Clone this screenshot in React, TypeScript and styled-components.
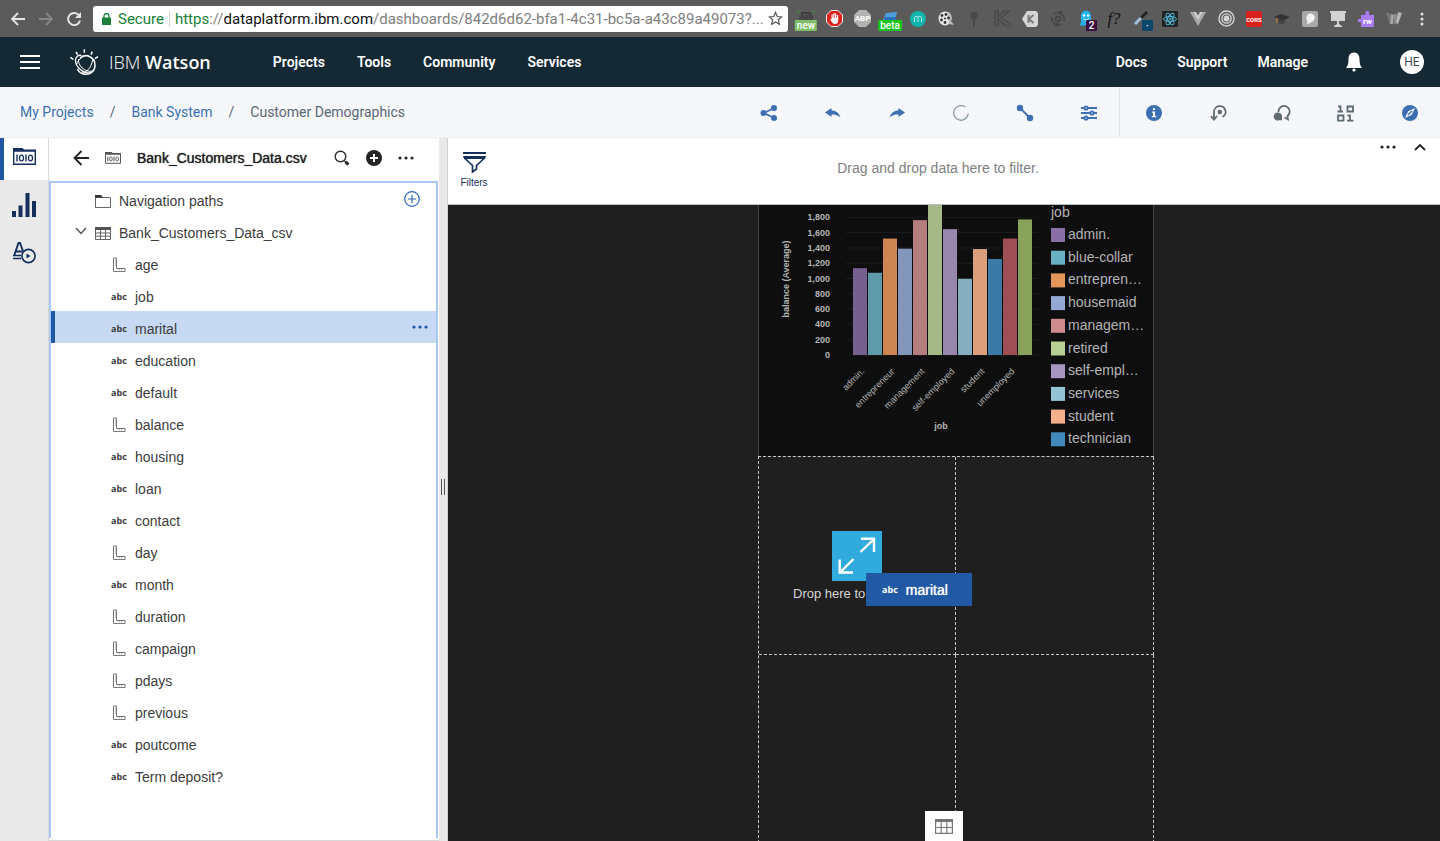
import React from "react";
import styled, { createGlobalStyle, css } from "styled-components";

const sans = `"Liberation Sans", Arial, sans-serif`;
const ui = `Roboto, "Noto Sans", sans-serif`;

const GlobalStyle = createGlobalStyle`
  *, *::before, *::after { box-sizing: border-box; }
  body { margin: 0; font-family: ${sans}; font-size: 14px; color: #3c3c3c; background: #1f1f1f; }
  button { font: inherit; color: inherit; background: none; border: 0; padding: 0; cursor: pointer; }
  a { color: inherit; text-decoration: none; }
  ul { list-style: none; margin: 0; padding: 0; }
  svg { display: block; flex: none; }
`;

const Shell = styled.div`
  display: flex;
  flex-direction: column;
  height: 100vh;
  min-height: 480px;
  overflow: hidden;
`;

/* ---------- browser bar ---------- */

const BrowserBar = styled.div`
  display: flex;
  align-items: center;
  flex: none;
  height: 37px;
  padding: 0 4px;
  background: #5b5b5b;
`;

const BrowserButton = styled.button`
  display: flex;
  align-items: center;
  justify-content: center;
  width: 28px;
  height: 28px;
`;

const Address = styled.div`
  display: flex;
  align-items: center;
  flex: 1;
  min-width: 0;
  height: 26px;
  margin: 0 4px 0 5px;
  padding: 0 5px 0 9px;
  border-radius: 3px;
  background: #fff;
  color: #808080;
  font: 15px/26px Roboto, sans-serif;
`;

const Secure = styled.span`
  margin: 0 5px 0 7px;
  padding-right: 5px;
  border-right: 1px solid #d2d2d2;
  color: #188038;
  line-height: 16px;
`;

const Url = styled.span`
  flex: 1;
  min-width: 0;
  overflow: hidden;
  white-space: nowrap;
`;

const UrlScheme = styled.span`
  color: #188038;
`;

const UrlHost = styled.span`
  color: #111;
`;

const Extension = styled.button`
  position: relative;
  display: flex;
  align-items: center;
  justify-content: center;
  width: 28px;
  height: 28px;
`;

const ExtensionBadge = styled.span<{ $color: string; $corner?: boolean }>`
  position: absolute;
  bottom: 2px;
  left: ${(p) => (p.$corner ? "14px" : "50%")};
  transform: ${(p) => (p.$corner ? "none" : "translateX(-50%)")};
  min-width: 11px;
  padding: 0 2px;
  border-radius: 1px;
  background: ${(p) => p.$color};
  color: #fff;
  font: 500 10px/11px Roboto, sans-serif;
`;

/* ---------- product header ---------- */

const Header = styled.header`
  display: flex;
  align-items: center;
  flex: none;
  height: 50px;
  padding: 0 16px 0 20px;
  background: #152935;
  color: #fff;
  font-family: ${ui};
`;

const Brand = styled.a`
  display: flex;
  align-items: center;
  gap: 10px;
  margin-left: 30px;
  font-family: "Open Sans", sans-serif;
  font-size: 18px;
  font-weight: 300;
  white-space: nowrap;

  strong { font-weight: 600; }
`;

const Nav = styled.nav<{ $end?: boolean }>`
  display: flex;
  gap: ${(p) => (p.$end ? "30px" : "32px")};
  margin-left: ${(p) => (p.$end ? "auto" : "62px")};
  margin-right: ${(p) => (p.$end ? "38px" : "0")};
  font-size: 14px;
  font-weight: 600;
`;

const Avatar = styled.button`
  display: flex;
  align-items: center;
  justify-content: center;
  width: 24px;
  height: 24px;
  margin-left: 38px;
  border-radius: 50%;
  background: #fff;
  color: #3b4b54;
  font: 12px ${ui};
`;

/* ---------- breadcrumb bar ---------- */

const SubHeader = styled.div`
  display: flex;
  align-items: stretch;
  flex: none;
  height: 51px;
  border-bottom: 1px solid #ececf0;
  background: #f5f7fb;
`;

const Breadcrumb = styled.nav`
  display: flex;
  align-items: center;
  gap: 16px;
  flex: 1;
  padding-left: 20px;
  color: #5a6872;
  font: 14px ${ui};
  white-space: nowrap;

  a { color: #3d70b2; }
`;

const ToolGroup = styled.div<{ $divided?: boolean }>`
  display: flex;
  ${(p) =>
    p.$divided &&
    css`
      border-left: 1px solid #dfe3e6;
    `}
`;

const ToolButton = styled.button`
  display: flex;
  align-items: center;
  justify-content: center;
  width: 64px;
  padding: 2px 0 0 3px;
  color: #3d70b2;
`;

/* ---------- workspace ---------- */

const Workspace = styled.div`
  display: flex;
  flex: 1;
  min-height: 0;
`;

const Rail = styled.div`
  flex: none;
  width: 49px;
  border-right: 1px solid #d8d8d8;
  background: #e9e9e9;
`;

const RailButton = styled.button<{ $active?: boolean }>`
  display: flex;
  align-items: center;
  justify-content: center;
  width: 100%;
  height: ${(p) => (p.$active ? "42px" : "48px")};
  border-left: 4px solid ${(p) => (p.$active ? "#1f57a4" : "transparent")};
  padding: ${(p) => (p.$active ? "0 4px 5px 0" : "1px 4px 0 0")};
  background: ${(p) => (p.$active ? "#fff" : "transparent")};
`;

const DataPanel = styled.section`
  display: flex;
  flex-direction: column;
  flex: none;
  width: 390px;
  padding: 0 1px 2px 0;
  border-bottom: 1px solid #d8d8d8;
  background: #fff;
`;

const PanelHeader = styled.header`
  display: flex;
  align-items: center;
  flex: none;
  height: 43px;
  padding: 0 16px 3px 24px;
`;

const SourceIcon = styled.span`
  margin: 0 16px;
`;

const PanelTitle = styled.h2`
  flex: 1;
  margin: 0;
  font-size: 14px;
  font-weight: 400;
  color: #222;
  text-shadow: 0 0 1px #222;
`;

const IconButton = styled.button`
  display: flex;
  align-items: center;
  justify-content: center;
  width: 32px;
  height: 32px;
`;

const Tree = styled.ul`
  flex: 1;
  min-height: 0;
  overflow: hidden;
  border: 2px solid #a9c8f8;
  border-bottom: 0;
`;

const TreeRow = styled.li<{ $depth: number; $selected?: boolean }>`
  display: flex;
  align-items: center;
  height: 32px;
  padding-left: ${(p) => (p.$depth ? "54px" : "20px")};
  border-left: 4px solid ${(p) => (p.$selected ? "#1f57a4" : "transparent")};
  background: ${(p) => (p.$selected ? "#c8daf3" : "transparent")};
`;

const Twisty = styled.span`
  width: 18px;
`;

const TreeIcon = styled.span`
  display: flex;
  align-items: center;
  justify-content: center;
  width: 20px;
  height: 32px;
  padding-top: 4px;
`;

const TreeLabel = styled.button`
  flex: 1;
  margin-left: 6px;
  padding-top: 4px;
  text-align: left;
  line-height: 28px;
`;

const TreeAction = styled(IconButton)`
  margin-right: 8px;
`;

const Abc = styled.span<{ $light?: boolean }>`
  color: ${(p) => (p.$light ? "#fff" : "#3c3c3c")};
  font: 700 9px/12px "Open Sans", sans-serif;
`;

const Splitter = styled.div`
  display: flex;
  align-items: center;
  justify-content: center;
  flex: none;
  width: 9px;
  padding-bottom: 5px;
  border-right: 1px solid #d0d0d0;
  background: #e9e9e9;
`;

const SplitterGrip = styled.span`
  width: 4px;
  height: 16px;
  border: 1px solid #555;
  border-width: 0 1px;
`;

const Main = styled.main`
  display: flex;
  flex-direction: column;
  flex: 1;
  min-width: 0;
`;

const FilterBar = styled.div`
  display: flex;
  align-items: flex-start;
  flex: none;
  height: 67px;
  border-bottom: 1px solid #b8bfc2;
  background: #fff;
`;

const FilterButton = styled.button`
  display: flex;
  flex-direction: column;
  align-items: center;
  gap: 4px;
  width: 52px;
  padding-top: 14px;
  color: #152f5c;
  font-size: 10px;
  line-height: 12px;
`;

const FilterHint = styled.p`
  flex: 1;
  margin: 0;
  padding-left: 8px;
  color: #808080;
  text-align: center;
  line-height: 60px;
`;

const FilterActions = styled.div`
  display: flex;
  padding: 0 4px;
  margin-top: -7px;
`;

const Canvas = styled.div`
  position: relative;
  display: flex;
  flex-direction: column;
  align-items: center;
  flex: 1;
  min-height: 0;
  overflow: hidden;
  padding-left: 24px;
  background: #1f1f1f;
`;

const ChartCard = styled.div`
  flex: none;
  height: 251px;
  border: 1px solid #3f4242;
  border-width: 0 1px;
  background: #0e0e0e;
`;

const DropGrid = styled.div`
  display: grid;
  grid-template-columns: 197px 198px;
  grid-auto-rows: 198px;
  flex: none;
  border-top: 1px dashed #c8c8c8;
  border-left: 1px dashed #c8c8c8;
`;

const DropCell = styled.div`
  position: relative;
  padding-top: 74px;
  border-right: 1px dashed #c8c8c8;
  border-bottom: 1px dashed #c8c8c8;
`;

const DropIcon = styled.div`
  width: 50px;
  margin: 0 auto;
  background: #31aade;
`;

const DropText = styled.p`
  margin: 4px 0 0 34px;
  color: #d6d6d6;
  font-size: 13px;
  line-height: 18px;
`;

const DragGhost = styled.div`
  position: absolute;
  z-index: 1;
  left: 107px;
  top: 116px;
  display: flex;
  align-items: center;
  gap: 8px;
  width: 106px;
  height: 33px;
  padding-left: 16px;
  background: #2159a5;
  color: #fff;
  text-shadow: 0 0 1px #fff;

  ${Abc} { text-shadow: none; }
`;

const DrawerTab = styled.button`
  position: absolute;
  left: 50%;
  bottom: 0;
  display: flex;
  align-items: center;
  justify-content: center;
  width: 38px;
  height: 30px;
  transform: translateX(-50%);
  background: #fff;
`;

/* ---------- icons ---------- */

const DataFolderIcon = ({ size, color }: { size: number; color: string }) => (
  <svg width={size} height={(size * 17) / 23} viewBox="0 0 23 17" fill="none" stroke={color}>
    <path d="M0 0h9.500l1.500 1.500h12v2.300H0z" fill={color} stroke="none" />
    <path d="M.7 3v13.300h21.600V3" strokeWidth="1.400" />
    <path d="M4 6.500v7M13 6.500v7" strokeWidth="1.400" />
    <ellipse cx="8.500" cy="10" rx="2" ry="2.900" strokeWidth="1.300" />
    <ellipse cx="17.500" cy="10" rx="2" ry="2.900" strokeWidth="1.300" />
  </svg>
);

const FolderIcon = () => (
  <svg width="16" height="13" viewBox="0 0 16 13" fill="none" stroke="#666">
    <path d="M.5 12.500v-10h15v10z" />
    <path d="M0 0h6l2 2.400H0z" fill="#333" stroke="none" />
  </svg>
);

const TableIcon = ({ color = "#555" }: { color?: string }) => (
  <svg width="16" height="13" viewBox="0 0 16 13" fill="none" stroke={color}>
    <path d="M0 0h16v3H0z" fill={color} stroke="none" />
    <path d="M.5 1v11.500h15V1M.5 6h15M.5 9.200h15M5.500 3v9.500M10.500 3v9.500" strokeWidth=".9" />
  </svg>
);

const LargeTableIcon = () => (
  <svg width="18" height="15" viewBox="0 0 18 15" fill="none" stroke="#777">
    <path d="M0 0h18v3H0z" fill="#777" stroke="none" />
    <path d="M.6 1v13.400h16.800V1M.5 8.500h17M6.200 3v11M11.800 3v11" strokeWidth="1.200" />
  </svg>
);

const RulerIcon = () => (
  <svg width="14" height="16" viewBox="0 0 14 16" fill="none" stroke="#777">
    <path d="M1.500 1h3v10.500h8.500v3H1.500z" />
    <path d="M3 3.500h1.500M3 6h1.500M3 8.500h1.500M7 11.500v1.500M9.500 11.500v1.500" strokeWidth=".8" />
  </svg>
);

const DotsIcon = ({ color }: { color: string }) => (
  <svg width="16" height="4" viewBox="0 0 16 4" fill={color}>
    <circle cx="2" cy="2" r="1.600" />
    <circle cx="8" cy="2" r="1.600" />
    <circle cx="14" cy="2" r="1.600" />
  </svg>
);

const WatsonLogo = () => (
  <svg width="29" height="27" viewBox="0 0 87 81" fill="none" stroke="#fff" strokeWidth="4.500">
    <path d="M30 27C44 12 76 22 75 50 74 68 60 76 48 76 34 76 26 68 22 60" />
    <path d="M34 19C14 16 8 42 32 62c10 9 24 12 32 8" strokeWidth="4" />
    <path d="M20 46c4-16 22-28 36-26M26 30c-4 18 18 42 42 36M34 72c14 0 30-14 34-40" strokeWidth="3" />
    <path d="M1 25l9 6M18 9l5 8M43 1v10M67 8l-4 9M84 23l-9 6" />
  </svg>
);

const ext = (title: string, body: React.ReactNode, badge?: React.ReactNode) => ({ title, body, badge });

const extensions = [
  ext(
    "Screenshot",
    <svg width="18" height="18" viewBox="0 0 18 18" fill="none">
      <path d="M5 5V3h8v2" stroke="#333" strokeWidth="1.500" />
      <path d="M2 5h14v8H2z" fill="#484848" />
      <path d="M1 4V1h3M14 1h3v3" stroke="#3f8a3f" />
    </svg>,
    <ExtensionBadge $color="#7fbf6a">new</ExtensionBadge>
  ),
  ext(
    "Ad blocker",
    <svg width="17" height="17" viewBox="0 0 17 17">
      <path d="M5 .5h7l4.500 4.500v7L12 16.500H5L.5 12V5z" fill="#d8231f" stroke="#eee" />
      <path
        d="M4 9l1.500.6V4.500h1.200V8h.6V3h1.200v5h.6V3.500h1.200V8h.6V5h1.300v5.500c0 2.500-1.500 3.500-3.300 3.500S5.800 12.500 4 9z"
        fill="#fff"
      />
    </svg>
  ),
  ext(
    "ABP",
    <svg width="17" height="17" viewBox="0 0 17 17">
      <path d="M5 0h7l5 5v7l-5 5H5l-5-5V5z" fill="#b3b3b3" />
      <text x="8.500" y="11.300" textAnchor="middle" fontFamily="Roboto" fontWeight="700" fontSize="8" fill="#fff">
        ABP
      </text>
    </svg>
  ),
  ext(
    "Folder tool",
    <svg width="16" height="18" viewBox="0 0 16 18">
      <path d="M4 3l11-1-2 8H1z" fill="#4d9fe0" />
      <path d="M3 7h11l-2 5H1z" fill="#2a6fb8" />
    </svg>,
    <ExtensionBadge $color="#18c61f">beta</ExtensionBadge>
  ),
  ext(
    "Momentum",
    <svg width="16" height="16" viewBox="0 0 16 16" fill="none">
      <circle cx="8" cy="8" r="8" fill="#12b5ab" />
      <path d="M4.500 11V6.500c0-1.500 3.500-1.500 3.500 0V11M8 6.500c0-1.500 3.500-1.500 3.500 0V11" stroke="#b8efe9" />
    </svg>
  ),
  ext(
    "Film",
    <svg width="17" height="16" viewBox="0 0 17 16">
      <ellipse cx="7" cy="7.500" rx="6.500" ry="7" fill="#e6e6e6" />
      <path d="M10 1c4 1 4 6 3 9l3 4-5-1z" fill="#bbb" />
      <g fill="#333">
        <circle cx="4" cy="4.500" r="1.400" /><circle cx="8" cy="3.500" r="1.400" />
        <circle cx="3.500" cy="9" r="1.400" /><circle cx="10.500" cy="7" r="1.400" />
        <circle cx="7" cy="11.500" r="1.400" /><circle cx="7" cy="7.500" r="1" />
      </g>
    </svg>
  ),
  ext(
    "Key",
    <svg width="10" height="16" viewBox="0 0 10 16" fill="#484848">
      <circle cx="5" cy="4.500" r="3.800" /><path d="M4 7h2v9H4z" />
    </svg>
  ),
  ext(
    "K arrow",
    <svg width="17" height="17" viewBox="0 0 17 17" fill="none" stroke="#474747" strokeWidth="1.200">
      <path d="M1 1v15h3V9l8 7h4v-4M1 1h3v6l6-6h5L7 8l8 5" />
    </svg>
  ),
  ext(
    "K",
    <svg width="17" height="16" viewBox="0 0 17 16" fill="none">
      <path d="M5 0h9l2 2v12l-2 2H5L0 8z" fill="#d5d5d5" />
      <path d="M6.500 4v8M11.500 4L7 8l4.500 4" stroke="#7a7a7a" strokeWidth="2" />
    </svg>
  ),
  ext(
    "Sync",
    <svg width="16" height="16" viewBox="0 0 16 16" fill="none" stroke="#444" strokeWidth="1.300">
      <circle cx="8" cy="8" r="2.500" />
      <path d="M12 13A6.500 6.500 0 0 1 2 6M4 3A6.500 6.500 0 0 1 14 10M9 13H5l2 2M8 1h4l-1 3" />
    </svg>
  ),
  ext(
    "Ghost",
    <svg width="14" height="17" viewBox="0 0 14 17">
      <path d="M1 15l1-3V6c0-7 10-7 10 0v6l2 4-4-1-2 2-2-2-3 1z" fill="#22b3ee" />
      <circle cx="5" cy="5.500" r="1.200" fill="#fff" /><circle cx="9" cy="5.500" r="1.200" fill="#fff" />
      <path d="M4.500 8.500c1 2 4 2 5 0" stroke="#fff" fill="none" />
    </svg>,
    <ExtensionBadge $color="#3a1040" $corner>2</ExtensionBadge>
  ),
  ext(
    "Font finder",
    <svg width="18" height="18" viewBox="0 0 18 18">
      <text x="9" y="13.500" textAnchor="middle" fontFamily="Liberation Serif" fontStyle="italic" fontSize="17" fill="#111">
        f?
      </text>
    </svg>
  ),
  ext(
    "Color picker",
    <svg width="18" height="18" viewBox="0 0 18 18" fill="none">
      <path d="M2 14L9 7" stroke="#9fc5de" strokeWidth="3" /><path d="M8 8l6-6" stroke="#222" strokeWidth="3" />
    </svg>,
    <ExtensionBadge $color="#08466b" $corner>·</ExtensionBadge>
  ),
  ext(
    "React",
    <svg width="16" height="16" viewBox="0 0 16 16" fill="none" stroke="#53c1de" strokeWidth=".9">
      <rect width="16" height="16" rx="1" fill="#222" stroke="none" />
      <ellipse cx="8" cy="8" rx="6.500" ry="2.500" />
      <ellipse cx="8" cy="8" rx="6.500" ry="2.500" transform="rotate(60 8 8)" />
      <ellipse cx="8" cy="8" rx="6.500" ry="2.500" transform="rotate(120 8 8)" />
      <circle cx="8" cy="8" r="1" />
    </svg>
  ),
  ext(
    "Vue",
    <svg width="16" height="14" viewBox="0 0 16 14">
      <path d="M0 0h5l3 5 3-5h5L8 14z" fill="#a9a9a9" /><path d="M3.500 0H6l2 3.500L10 0h2.500L8 8z" fill="#cfcfcf" />
    </svg>
  ),
  ext(
    "Orbit",
    <svg width="17" height="17" viewBox="0 0 17 17" fill="none" stroke="#d4d4d4" strokeWidth="1.400">
      <circle cx="8.500" cy="8.500" r="7.500" /><circle cx="8.500" cy="8.500" r="4.600" />
      <circle cx="8.500" cy="8.500" r="2.200" fill="#d4d4d4" />
    </svg>
  ),
  ext(
    "CORS",
    <svg width="16" height="16" viewBox="0 0 16 16">
      <rect width="16" height="16" rx="2" fill="#d9201c" />
      <text x="8" y="10.500" textAnchor="middle" fontFamily="Roboto" fontWeight="700" fontSize="6" fill="#fff">
        CORS
      </text>
    </svg>
  ),
  ext(
    "Scholar",
    <svg width="16" height="12" viewBox="0 0 16 12">
      <path d="M0 4l7-3 9 3-8 4z" fill="#333" /><path d="M4 6v4c2 1.500 5 1.500 7 0V6L8 8z" fill="#444" />
      <path d="M3 5v5" stroke="#c98a2a" />
    </svg>
  ),
  ext(
    "Balloon",
    <svg width="16" height="16" viewBox="0 0 16 16">
      <rect width="16" height="16" rx="2" fill="#a8a8a8" />
      <path d="M9 2.500c6 1 4 8 0 9l-4 2 .5-3C3 7 5 2 9 2.500z" fill="#f2f2f2" />
    </svg>
  ),
  ext(
    "Presenter",
    <svg width="16" height="16" viewBox="0 0 16 16" fill="#d2d2d2">
      <path d="M0 0h16v2h-1v8H1V2H0zM7 10h2v3l3 2v1H4v-1l3-2z" />
    </svg>
  ),
  ext(
    "RW",
    <svg width="17" height="16" viewBox="0 0 17 16">
      <path d="M3 4h4.500V2.500a1.800 1.800 0 0 1 3.500-1.500V4h5v12H3v-5H0V8h3z" fill="#a97bf0" />
      <text x="9.500" y="12.500" textAnchor="middle" fontFamily="Roboto" fontWeight="700" fontSize="8" fill="#fff">
        rw
      </text>
    </svg>
  ),
  ext(
    "W",
    <svg width="16" height="13" viewBox="0 0 16 13">
      <path d="M0 1h4l2 8-2 3z" fill="#777" /><path d="M5 2l3 1-1 9H4z" fill="#a5a5a5" />
      <path d="M8 2h3v9l-3 2z" fill="#888" /><path d="M12 0l4 1-4 11-2-1z" fill="#b5b5b5" />
    </svg>
  ),
  ext(
    "Menu",
    <svg width="4" height="14" viewBox="0 0 4 14" fill="#e6e6e6">
      <circle cx="2" cy="2" r="1.500" /><circle cx="2" cy="7" r="1.500" /><circle cx="2" cy="12" r="1.500" />
    </svg>
  ),
];

const editTools = [
  ext(
    "Share",
    <svg width="18" height="18" viewBox="0 0 18 18" fill="currentColor">
      <path d="M14 4L4 9l10 5" fill="none" stroke="currentColor" strokeWidth="1.800" />
      <circle cx="3.500" cy="9" r="3" /><circle cx="14" cy="4" r="3" /><circle cx="14" cy="14" r="3" />
    </svg>
  ),
  ext(
    "Undo",
    <svg width="16" height="12" viewBox="0 0 16 12" fill="currentColor">
      <path d="M0 5.500L6.500 1v2.500C11 3.500 14 6 15.500 10.500 12.500 8 10 7.500 6.500 7.500V10z" />
    </svg>
  ),
  ext(
    "Redo",
    <svg width="16" height="12" viewBox="0 0 16 12" fill="currentColor">
      <path d="M16 5.500L9.500 1v2.500C5 3.500 2 6 .5 10.500 3.500 8 6 7.500 9.500 7.500V10z" />
    </svg>
  ),
  ext(
    "Refresh",
    <svg width="16" height="16" viewBox="0 0 16 16" fill="none" stroke="#8c9ba5" strokeWidth="1.300">
      <path d="M12.300 2A7.300 7.300 0 1 0 15.300 8.500" />
    </svg>
  ),
  ext(
    "Connect",
    <svg width="18" height="18" viewBox="0 0 18 18" fill="currentColor">
      <path d="M4 4l10 10" stroke="currentColor" strokeWidth="1.800" />
      <circle cx="4" cy="4" r="3.200" /><circle cx="14" cy="14" r="3.200" />
    </svg>
  ),
  ext(
    "Settings",
    <svg width="16" height="16" viewBox="0 0 16 16" fill="#f5f7fb" stroke="currentColor" strokeWidth="1.900">
      <path d="M0 3h16M0 8h16M0 13h16" />
      <circle cx="5" cy="3" r="1.600" /><circle cx="11" cy="8" r="1.600" /><circle cx="5" cy="13" r="1.600" />
    </svg>
  ),
];

const viewTools = [
  ext(
    "Info",
    <svg width="16" height="16" viewBox="0 0 16 16">
      <circle cx="8" cy="8" r="8" fill="currentColor" />
      <path d="M7 3.200h2v1.800H7zM6 6.500h3v4.500h1.200v1.300H5.800V11H7V7.800H6z" fill="#fff" />
    </svg>
  ),
  ext(
    "Replay",
    <svg width="18" height="18" viewBox="0 0 18 18" fill="none" stroke="#5f6b70" strokeWidth="1.800">
      <path d="M5 15V8a5.800 5.800 0 1 1 8.500 5" /><path d="M2 12l3 3.500L8 12" />
      <circle cx="10.800" cy="8" r="2.200" fill="#5f6b70" stroke="none" />
    </svg>
  ),
  ext(
    "Comments",
    <svg width="18" height="18" viewBox="0 0 18 18" fill="none" stroke="#5f6b70" strokeWidth="1.700">
      <path d="M5.500 8a5.600 5.600 0 1 1 9 4l.5 3.500-3.500-2" />
      <path d="M5 8.500a4 4 0 0 1 3.800 5.500l.4 2.500-2.500-.5A4 4 0 1 1 5 8.500z" fill="#5f6b70" stroke="none" />
    </svg>
  ),
  ext(
    "Data",
    <svg width="17" height="17" viewBox="0 0 17 17" fill="none" stroke="#5f6b70" strokeWidth="1.800">
      <path d="M1 1.500h2.500V6.500M.5 6.500H6M10.500 1.500H16v5h-5.500zM1 10.500h5.500v5.200H1zM10.500 10.500H13v5.200M10 15.700h6.500" />
    </svg>
  ),
  ext(
    "Explore",
    <svg width="16" height="16" viewBox="0 0 16 16">
      <circle cx="8" cy="8" r="8" fill="currentColor" />
      <path d="M13 3L9.800 9.800 3 13l3.200-6.800z" fill="#f5f7fb" />
      <path d="M6 10l4-4" stroke="currentColor" strokeWidth="1.300" />
    </svg>
  ),
];

/* ---------- data ---------- */

type Field = { name: string; kind: "measure" | "text" };

const fields: Field[] = [
  { name: "age", kind: "measure" },
  { name: "job", kind: "text" },
  { name: "marital", kind: "text" },
  { name: "education", kind: "text" },
  { name: "default", kind: "text" },
  { name: "balance", kind: "measure" },
  { name: "housing", kind: "text" },
  { name: "loan", kind: "text" },
  { name: "contact", kind: "text" },
  { name: "day", kind: "measure" },
  { name: "month", kind: "text" },
  { name: "duration", kind: "measure" },
  { name: "campaign", kind: "measure" },
  { name: "pdays", kind: "measure" },
  { name: "previous", kind: "measure" },
  { name: "poutcome", kind: "text" },
  { name: "Term deposit?", kind: "text" },
];

const bars = [
  { value: 1135, color: "#75608f" },
  { value: 1075, color: "#5f9bab" },
  { value: 1522, color: "#cd8651" },
  { value: 1390, color: "#8296b9" },
  { value: 1763, color: "#b67d7f" },
  { value: 2200, color: "#a4b985" },
  { value: 1645, color: "#9787ad" },
  { value: 996, color: "#84adbd" },
  { value: 1385, color: "#db9f7d" },
  { value: 1255, color: "#3b7aa6" },
  { value: 1522, color: "#9d4f55" },
  { value: 1772, color: "#89a35c" },
];

const ticks = [0, 200, 400, 600, 800, 1000, 1200, 1400, 1600, 1800];
const categories = ["admin.", "entrepreneur", "management", "self-employed", "student", "unemployed"];

const legend = [
  ["admin.", "#8870a6"],
  ["blue-collar", "#69b0c2"],
  ["entrepren…", "#e5965b"],
  ["housemaid", "#93a8d2"],
  ["managem…", "#cd8b8d"],
  ["retired", "#b7cf93"],
  ["self-empl…", "#a896c0"],
  ["services", "#93c3d4"],
  ["student", "#f3b08b"],
  ["technician", "#4289bb"],
];

const yOf = (value: number) => 150 - value * 0.0765;

const BalanceChart = () => (
  <svg width="394" height="251" viewBox="0 0 394 251" fontFamily="Liberation Sans, Arial, sans-serif" fill="#b4b4b4">
    <g fontSize="9" fontWeight="700">
      {ticks.map((t) => (
        <React.Fragment key={t}>
          <path d={`M87 ${yOf(t)}h192`} stroke="#1d1d1d" />
          <text x="71" y={yOf(t) + 3} textAnchor="end">
            {t.toLocaleString("en-US")}
          </text>
        </React.Fragment>
      ))}
      <text x="0" y="0" textAnchor="middle" transform="translate(30 74) rotate(-90)">
        balance (Average)
      </text>
      <text x="182" y="224" textAnchor="middle">
        job
      </text>
    </g>
    {bars.map((b, i) => (
      <rect key={i} x={94 + i * 15} y={yOf(b.value)} width="14" height={b.value * 0.0765} fill={b.color} />
    ))}
    <g fontSize="9">
      {categories.map((c, i) => (
        <text key={c} textAnchor="end" transform={`translate(${106 + i * 30} 167) rotate(-45)`}>
          {c}
        </text>
      ))}
    </g>
    <g fontSize="14">
      <text x="292" y="12">
        job
      </text>
      {legend.map(([name, color], i) => (
        <React.Fragment key={name}>
          <rect x="292" y={23 + i * 22.7} width="14" height="14" fill={color} />
          <text x="309" y={34 + i * 22.7}>
            {name}
          </text>
        </React.Fragment>
      ))}
    </g>
  </svg>
);

/* ---------- page ---------- */

export default function App() {
  return (
    <Shell>
      <GlobalStyle />

      <BrowserBar>
        <BrowserButton aria-label="Back">
          <svg width="14" height="14" viewBox="0 0 14 14" fill="none" stroke="#e4e4e4" strokeWidth="1.800">
            <path d="M14 7H1.500M7 1L1 7l6 6" />
          </svg>
        </BrowserButton>
        <BrowserButton aria-label="Forward">
          <svg width="14" height="14" viewBox="0 0 14 14" fill="none" stroke="#858585" strokeWidth="1.800">
            <path d="M0 7h12.500M7 1l6 6-6 6" />
          </svg>
        </BrowserButton>
        <BrowserButton aria-label="Reload">
          <svg width="14" height="14" viewBox="0 0 14 14" fill="none" stroke="#e4e4e4" strokeWidth="1.900">
            <path d="M12 3.500A6 6 0 1 0 13 8.500" /><path d="M14 0v6H8z" fill="#e4e4e4" stroke="none" />
          </svg>
        </BrowserButton>
        <Address role="textbox" aria-label="Address" tabIndex={0}>
          <svg width="9" height="12" viewBox="0 0 9 12">
            <path d="M0 4.500h9V12H0z" fill="#188038" />
            <path d="M2 5V3a2.500 2.500 0 0 1 5 0v2" fill="none" stroke="#188038" strokeWidth="1.300" />
          </svg>
          <Secure>Secure</Secure>
          <Url>
            <UrlScheme>https</UrlScheme>://<UrlHost>dataplatform.ibm.com</UrlHost>
            /dashboards/842d6d62-bfa1-4c31-bc5a-a43c89a49073?...
          </Url>
          <svg width="15" height="15" viewBox="0 0 16 16" fill="none" stroke="#555" strokeWidth="1.300">
            <path d="M8 1.500l1.900 4.400 4.700.4-3.600 3.100 1.100 4.700L8 11.600l-4.100 2.500L5 9.400 1.400 6.300l4.700-.4z" />
          </svg>
        </Address>
        {extensions.map((e) => (
          <Extension key={e.title} aria-label={e.title}>
            {e.body}
            {e.badge}
          </Extension>
        ))}
      </BrowserBar>

      <Header>
        <button aria-label="Menu">
          <svg width="20" height="16" viewBox="0 0 20 16" stroke="#fff" strokeWidth="2">
            <path d="M0 2h20M0 8h20M0 14h20" />
          </svg>
        </button>
        <Brand href="#">
          <WatsonLogo />
          <span>
            IBM <strong>Watson</strong>
          </span>
        </Brand>
        <Nav>
          <a href="#projects">Projects</a>
          <a href="#tools">Tools</a>
          <a href="#community">Community</a>
          <a href="#services">Services</a>
        </Nav>
        <Nav $end>
          <a href="#docs">Docs</a>
          <a href="#support">Support</a>
          <a href="#manage">Manage</a>
        </Nav>
        <button aria-label="Notifications">
          <svg width="16" height="20" viewBox="0 0 16 20" fill="#fff">
            <path d="M8 .5c4 0 5.500 3 5.500 7 0 4.500 1 6.500 2.500 8.500H0c1.500-2 2.500-4 2.500-8.500 0-4 1.500-7 5.500-7z" />
            <circle cx="8" cy="18" r="1.600" />
          </svg>
        </button>
        <Avatar>HE</Avatar>
      </Header>

      <SubHeader>
        <Breadcrumb aria-label="Breadcrumb">
          <a href="#my-projects">My Projects</a>
          <span>/</span>
          <a href="#bank-system">Bank System</a>
          <span>/</span>
          <span>Customer Demographics</span>
        </Breadcrumb>
        <ToolGroup>
          {editTools.map((t) => (
            <ToolButton key={t.title} aria-label={t.title}>
              {t.body}
            </ToolButton>
          ))}
        </ToolGroup>
        <ToolGroup $divided>
          {viewTools.map((t) => (
            <ToolButton key={t.title} aria-label={t.title}>
              {t.body}
            </ToolButton>
          ))}
        </ToolGroup>
      </SubHeader>

      <Workspace>
        <Rail>
          <RailButton $active aria-label="Data">
            <DataFolderIcon size={23} color="#152f5c" />
          </RailButton>
          <RailButton aria-label="Visualizations">
            <svg width="24" height="24" viewBox="0 0 24 24" fill="#152f5c">
              <path d="M0 18h4v6H0zM6.500 12.500h4V24h-4zM13.500 0h4v24h-4zM20 8h4v16h-4z" />
            </svg>
          </RailButton>
          <RailButton aria-label="Text and media">
            <svg width="23" height="22" viewBox="0 0 23 22" fill="none" stroke="#152f5c">
              <path d="M1 14L5.500 1h1.500l3 8M3 9.500h6.500" strokeWidth="1.900" />
              <path d="M0 13.500h8M0 16.500h8" strokeWidth="1.600" />
              <circle cx="15.500" cy="14" r="6.600" strokeWidth="1.600" />
              <path d="M13.500 11.500v5l4-2.500z" fill="#152f5c" stroke="none" />
            </svg>
          </RailButton>
        </Rail>

        <DataPanel>
          <PanelHeader>
            <button aria-label="Back to sources">
              <svg width="16" height="16" viewBox="0 0 16 16" fill="none" stroke="#222" strokeWidth="1.800">
                <path d="M16 8H2M8.500 1L1.500 8l7 7" />
              </svg>
            </button>
            <SourceIcon>
              <DataFolderIcon size={16} color="#555" />
            </SourceIcon>
            <PanelTitle>Bank_Customers_Data.csv</PanelTitle>
            <IconButton aria-label="Search">
              <svg width="16" height="16" viewBox="0 0 16 16" fill="none" stroke="#2c2c2c">
                <circle cx="6.500" cy="6.500" r="5.300" strokeWidth="1.400" />
                <path d="M10.500 11l1.500 1.300" strokeWidth="1.600" />
                <path d="M11.500 12l3 2.500" strokeWidth="3" />
              </svg>
            </IconButton>
            <IconButton aria-label="Add">
              <svg width="16" height="16" viewBox="0 0 16 16">
                <circle cx="8" cy="8" r="8" fill="#262626" /><path d="M8 4v8M4 8h8" stroke="#fff" strokeWidth="2" />
              </svg>
            </IconButton>
            <IconButton aria-label="More">
              <DotsIcon color="#262626" />
            </IconButton>
          </PanelHeader>

          <Tree>
            <TreeRow $depth={0}>
              <Twisty />
              <TreeIcon><FolderIcon /></TreeIcon>
              <TreeLabel>Navigation paths</TreeLabel>
              <TreeAction aria-label="Add navigation path">
                <svg width="16" height="16" viewBox="0 0 16 16" fill="none" stroke="#2f69b3" strokeWidth="1.200">
                  <circle cx="8" cy="8" r="7.300" /><path d="M8 4v8M4 8h8" />
                </svg>
              </TreeAction>
            </TreeRow>
            <TreeRow $depth={0}>
              <Twisty>
                <svg width="12" height="8" viewBox="0 0 12 8" fill="none" stroke="#555" strokeWidth="1.400">
                  <path d="M1 1l5 5.500L11 1" />
                </svg>
              </Twisty>
              <TreeIcon><TableIcon /></TreeIcon>
              <TreeLabel>Bank_Customers_Data_csv</TreeLabel>
            </TreeRow>
            {fields.map((f) => {
              const selected = f.name === "marital";
              return (
                <TreeRow key={f.name} $depth={1} $selected={selected}>
                  <TreeIcon>{f.kind === "text" ? <Abc>abc</Abc> : <RulerIcon />}</TreeIcon>
                  <TreeLabel>{f.name}</TreeLabel>
                  {selected && (
                    <IconButton aria-label="Column actions">
                      <DotsIcon color="#1f57a4" />
                    </IconButton>
                  )}
                </TreeRow>
              );
            })}
          </Tree>
        </DataPanel>

        <Splitter>
          <SplitterGrip />
        </Splitter>

        <Main>
          <FilterBar>
            <FilterButton>
              <svg width="23" height="21" viewBox="0 0 23 21" fill="none" stroke="#152f5c">
                <path d="M0 1h23" strokeWidth="2" /><path d="M0 4h23L22 7H1z" fill="#152f5c" stroke="none" />
                <path d="M2 6.500l7.500 7V20l4-3v-3.500l7.500-7" strokeWidth="1.700" />
              </svg>
              Filters
            </FilterButton>
            <FilterHint>Drag and drop data here to filter.</FilterHint>
            <FilterActions>
              <IconButton aria-label="More">
                <DotsIcon color="#222" />
              </IconButton>
              <IconButton aria-label="Collapse">
                <svg width="12" height="8" viewBox="0 0 12 8" fill="none" stroke="#222" strokeWidth="1.800">
                  <path d="M1 7l5-5 5 5" />
                </svg>
              </IconButton>
            </FilterActions>
          </FilterBar>

          <Canvas>
            <ChartCard>
              <BalanceChart />
            </ChartCard>
            <DropGrid>
              <DropCell>
                <DropIcon>
                  <svg width="50" height="50" viewBox="0 0 50 50" fill="none" stroke="#fff" strokeWidth="2.400">
                    <path d="M29 7.700h13V21M42 8L28.500 21M7.700 28.500v13H21M8 41.500L21.500 28" />
                  </svg>
                </DropIcon>
                <DropText>Drop here to</DropText>
                <DragGhost>
                  <Abc $light>abc</Abc>
                  marital
                </DragGhost>
              </DropCell>
              <DropCell />
              <DropCell />
              <DropCell />
            </DropGrid>
            <DrawerTab aria-label="Open data grid">
              <LargeTableIcon />
            </DrawerTab>
          </Canvas>
        </Main>
      </Workspace>
    </Shell>
  );
}
